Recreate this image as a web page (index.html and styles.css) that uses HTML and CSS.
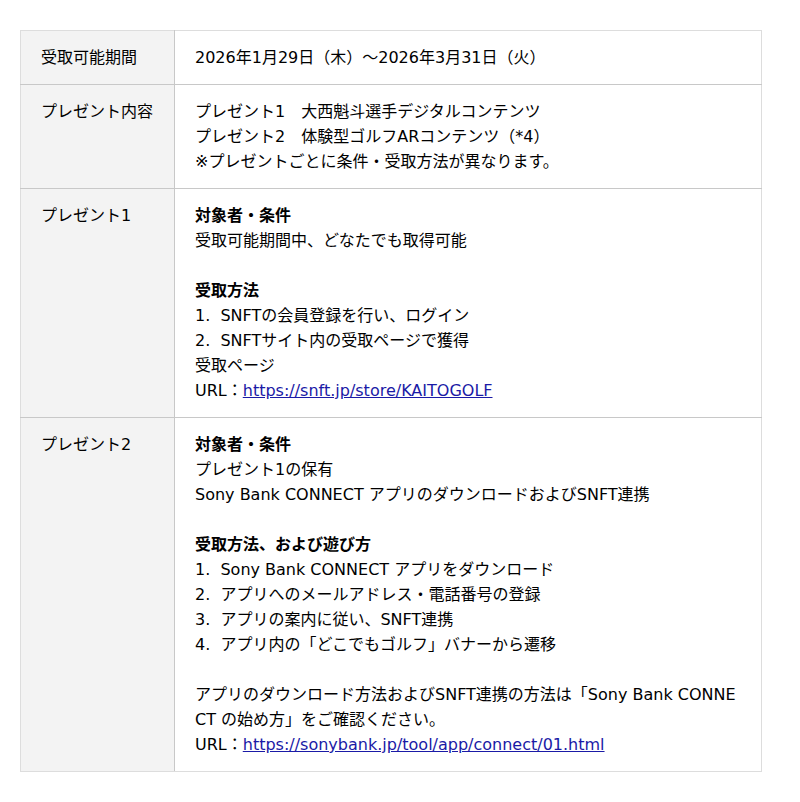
FILE: index.html
```html
<!DOCTYPE html>
<html lang="ja">
<head>
<meta charset="utf-8">
<link rel="stylesheet" href="styles.css">
</head>
<body>
<table class="info">
  <tr>
    <th>受取可能期間</th>
    <td>2026年1月29日（木）～2026年3月31日（火）</td>
  </tr>
  <tr>
    <th>プレゼント内容</th>
    <td>プレゼント1　大西魁斗選手デジタルコンテンツ<br>プレゼント2　体験型ゴルフARコンテンツ（*4）<br>※プレゼントごとに条件・受取方法が異なります。</td>
  </tr>
  <tr>
    <th>プレゼント1</th>
    <td><b>対象者・条件</b><br>受取可能期間中、どなたでも取得可能<br><br><b>受取方法</b><br>1.&nbsp;&nbsp;SNFTの会員登録を行い、ログイン<br>2.&nbsp;&nbsp;SNFTサイト内の受取ページで獲得<br>受取ページ<br>URL：<a href="#">https://snft.jp/store/KAITOGOLF</a></td>
  </tr>
  <tr>
    <th>プレゼント2</th>
    <td class="wrap"><b>対象者・条件</b><br>プレゼント1の保有<br>Sony Bank CONNECT アプリのダウンロードおよびSNFT連携<br><br><b>受取方法、および遊び方</b><br>1.&nbsp;&nbsp;Sony Bank CONNECT アプリをダウンロード<br>2.&nbsp;&nbsp;アプリへのメールアドレス・電話番号の登録<br>3.&nbsp;&nbsp;アプリの案内に従い、SNFT連携<br>4.&nbsp;&nbsp;アプリ内の「どこでもゴルフ」バナーから遷移<br><br>アプリのダウンロード方法およびSNFT連携の方法は「Sony Bank CONNECT の始め方」をご確認ください。<br>URL：<a href="#">https://sonybank.jp/tool/app/connect/01.html</a></td>
  </tr>
</table>
</body>
</html>
```
FILE: styles.css
```css
html, body {
  margin: 0;
  padding: 0;
  background: #fff;
}
body {
  padding: 30px 20px;
  font-family: "DejaVu Sans", "Noto Sans CJK JP", sans-serif;
  font-size: 16px;
  line-height: 25px;
  color: #000;
}
.info {
  width: 742px;
  border-collapse: collapse;
  border: 1px solid #ddd;
}
.info th, .info td {
  text-align: left;
  vertical-align: top;
  padding: 14px 20px 14px 20px;
  border-top: 1px solid #c8c8c8;
  border-bottom: 1px solid #c8c8c8;
}
.info tr:first-child th, .info tr:first-child td {
  border-top: 1px solid #ddd;
}
.info tr:last-child th, .info tr:last-child td {
  border-bottom: 1px solid #ddd;
}
.info th {
  width: 113px;
  font-weight: normal;
  background: #f3f3f3;
  border-right: 1px solid #c8c8c8;
}
.info td b {
  font-weight: bold;
}
.info a {
  color: #1a1aa6;
  text-decoration: underline;
}
.wrap {
  word-break: break-all;
}
```
